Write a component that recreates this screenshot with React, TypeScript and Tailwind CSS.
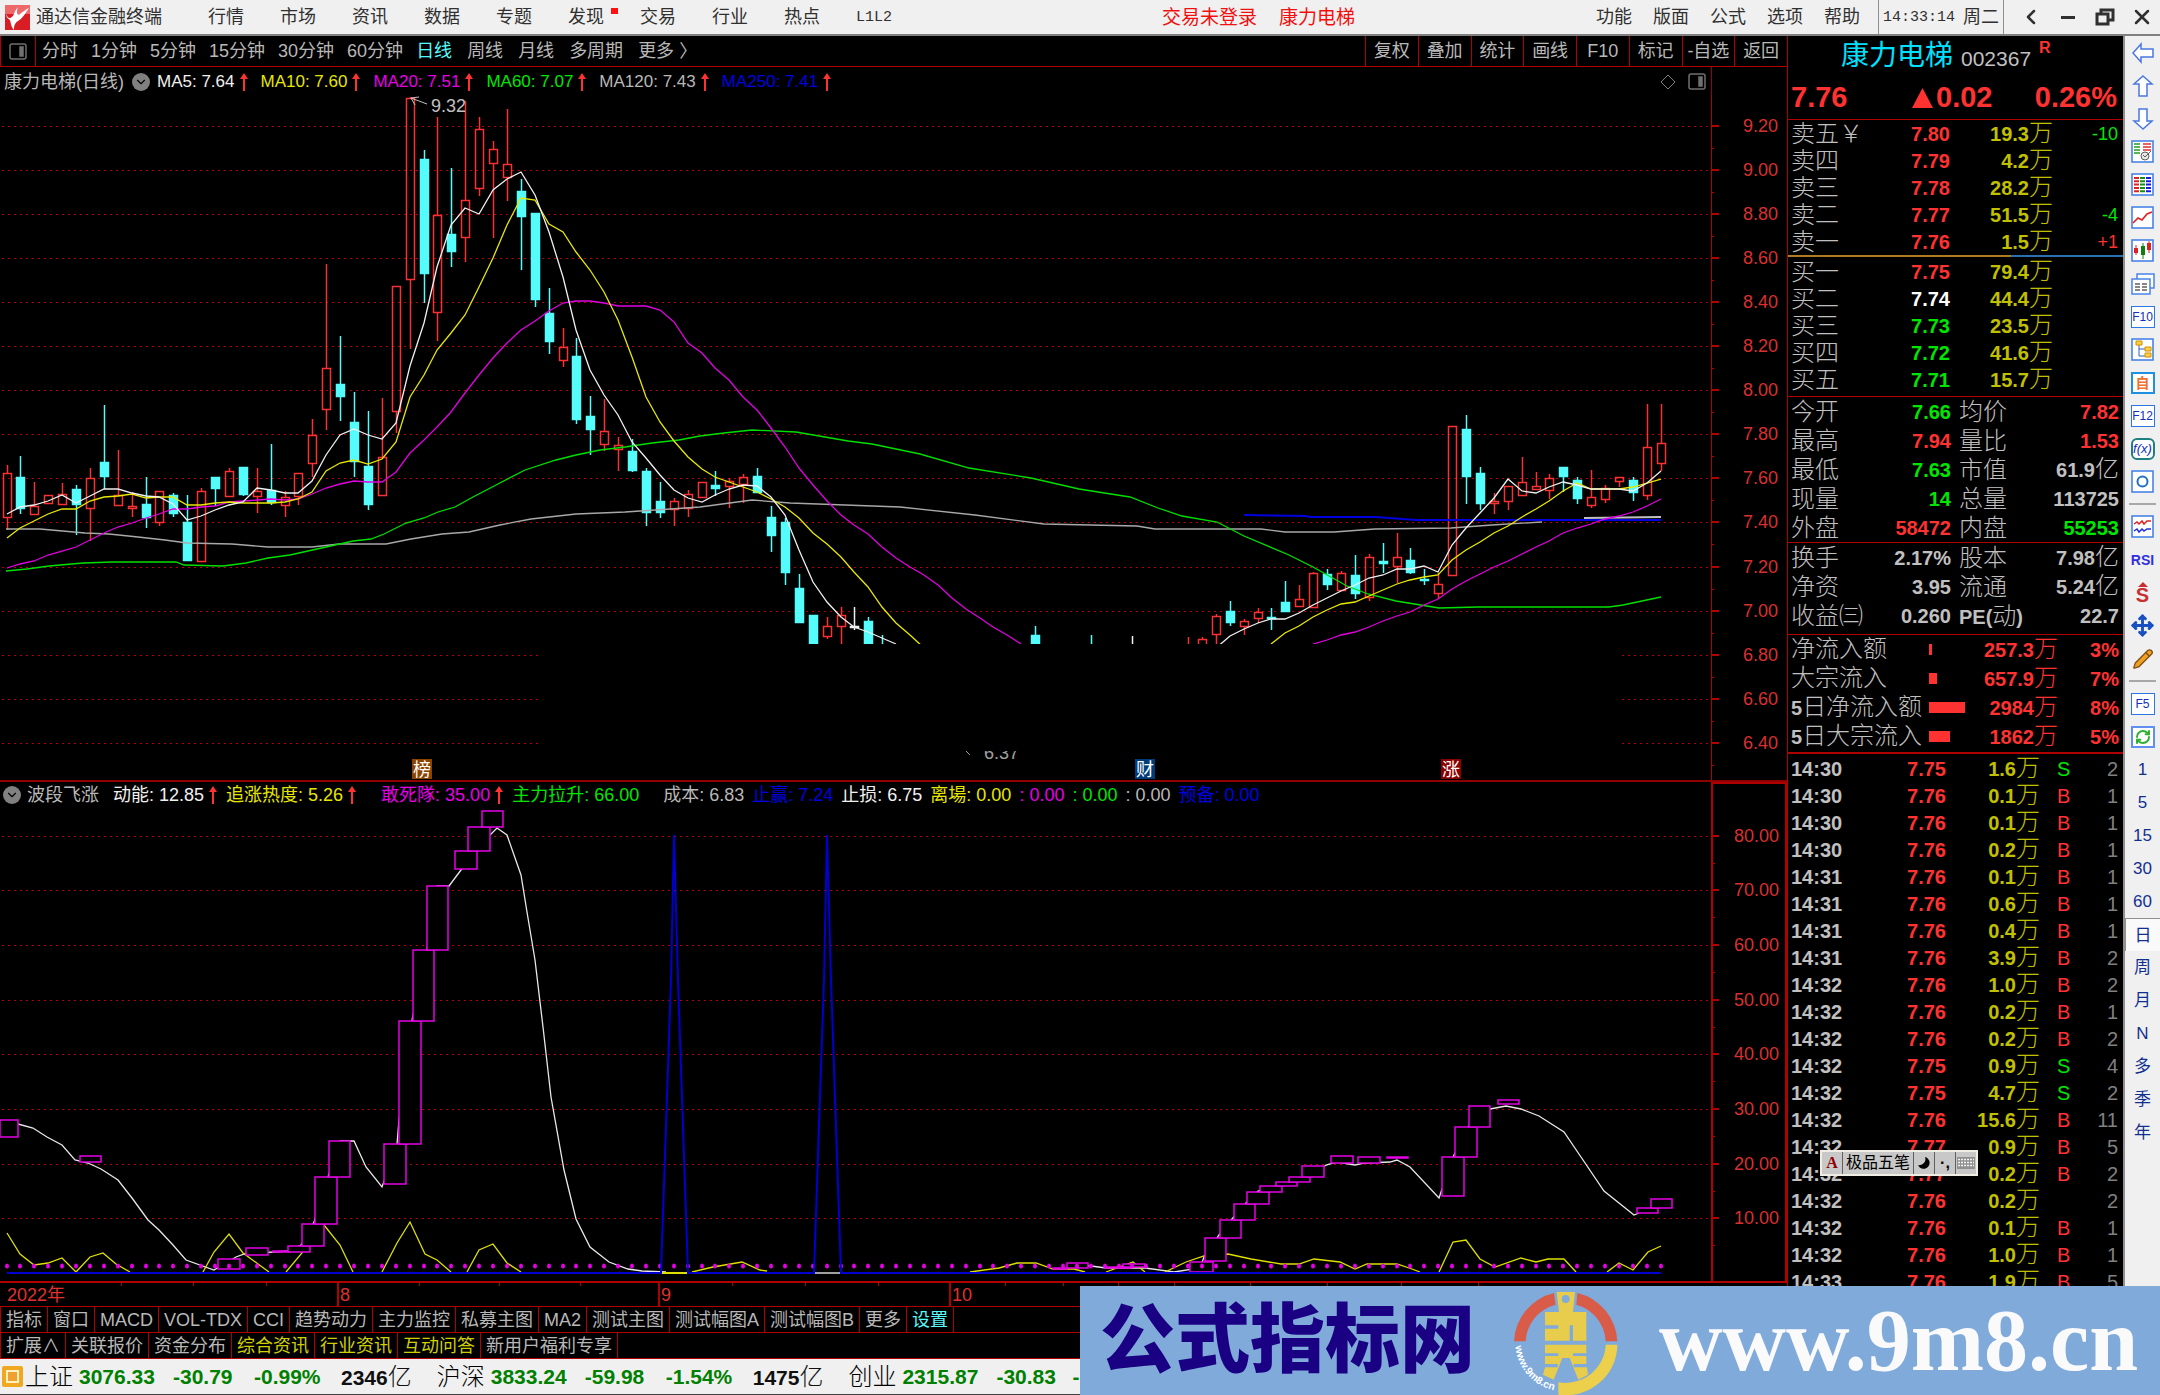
import React from 'react';
import { ChevronLeft, ChevronDown, X, Move, Pencil, RefreshCw } from 'lucide-react';

const menus = ['行情', '市场', '资讯', '数据', '专题', '发现', '交易', '行业', '热点', 'L1L2'];
const rightMenus = ['功能', '版面', '公式', '选项', '帮助'];
const periods = ['分时', '1分钟', '5分钟', '15分钟', '30分钟', '60分钟'];
const longPeriods = ['周线', '月线', '多周期', '更多 〉'];
const tools = ['复权', '叠加', '统计', '画线', 'F10', '标记', '-自选', '返回'];

const averages = [
  { text: 'MA5: 7.64', color: 'text-[#f0f0f0]' },
  { text: 'MA10: 7.60', color: 'text-[#e6e600]' },
  { text: 'MA20: 7.51', color: 'text-[#e600e6]' },
  { text: 'MA60: 7.07', color: 'text-[#00e600]' },
  { text: 'MA120: 7.43', color: 'text-[#b8b8b8]' },
  { text: 'MA250: 7.41', color: 'text-[#0000e0]' },
];

const signals = [
  { text: '动能: 12.85', color: 'text-[#f0f0f0]', up: true },
  { text: '追涨热度: 5.26', color: 'text-[#e6e600]', up: true },
  { text: '敢死隊: 35.00', color: 'text-[#e600e6] ml-4', up: true },
  { text: '主力拉升: 66.00', color: 'text-[#00e600] mr-4' },
  { text: '成本: 6.83', color: 'text-[#b8b8b8]' },
  { text: '止赢: 7.24', color: 'text-[#0000e0]' },
  { text: '止损: 6.75', color: 'text-[#f0f0f0]' },
  { text: '离場: 0.00', color: 'text-[#e6e600]' },
  { text: ': 0.00', color: 'text-[#e600e6]' },
  { text: ': 0.00', color: 'text-[#00e600]' },
  { text: ': 0.00', color: 'text-[#b8b8b8]' },
  { text: '预备: 0.00', color: 'text-[#0000e0]' },
];

const tabs = ['指标', '窗口', 'MACD', 'VOL-TDX', 'CCI', '趋势动力', '主力监控', '私募主图', 'MA2', '测试主图', '测试幅图A', '测试幅图B', '更多', '设置'];
const extras = ['扩展∧', '关联报价', '资金分布', '综合资讯', '行业资讯', '互动问答', '新用户福利专享'];

const indices = [
  { name: '上证', last: '3076.33', diff: '-30.79', pct: '-0.99%', amount: '2346' },
  { name: '沪深', last: '3833.24', diff: '-59.98', pct: '-1.54%', amount: '1475' },
];

const RED = 'text-[#ff3232]';
const GREEN = 'text-[#00e600]';
const GRAY = 'text-[#c0c0c0]';

const sells = [
  ['卖五￥', '7.80', RED, '19.3', '-10', GREEN],
  ['卖四', '7.79', RED, '4.2', '', ''],
  ['卖三', '7.78', RED, '28.2', '', ''],
  ['卖二', '7.77', RED, '51.5', '-4', GREEN],
  ['卖一', '7.76', RED, '1.5', '+1', RED],
];
const buys = [
  ['买一', '7.75', RED, '79.4', '', ''],
  ['买二', '7.74', 'text-white', '44.4', '', ''],
  ['买三', '7.73', GREEN, '23.5', '', ''],
  ['买四', '7.72', GREEN, '41.6', '', ''],
  ['买五', '7.71', GREEN, '15.7', '', ''],
];

const quotes = [
  ['今开', '7.66', GREEN, '均价', '7.82', '', RED],
  ['最高', '7.94', RED, '量比', '1.53', '', RED],
  ['最低', '7.63', GREEN, '市值', '61.9', '亿', GRAY],
  ['现量', '14', GREEN, '总量', '113725', '', GRAY],
  ['外盘', '58472', RED, '内盘', '55253', '', GREEN],
];
const basics = [
  ['换手', '2.17%', GRAY, '股本', '7.98', '亿', GRAY],
  ['净资', '3.95', GRAY, '流通', '5.24', '亿', GRAY],
  ['收益㈢', '0.260', GRAY, 'PE(动)', '22.7', '', GRAY],
];

const flows = [
  { label: '净流入额', bar: 3, value: '257.3', pct: '3%' },
  { label: '大宗流入', bar: 8, value: '657.9', pct: '7%' },
  { label: '5日净流入额', bar: 36, value: '2984', pct: '8%' },
  { label: '5日大宗流入', bar: 21, value: '1862', pct: '5%' },
];

const ticks = [
  ['14:30', '7.75', '1.6', 'S', '2'],
  ['14:30', '7.76', '0.1', 'B', '1'],
  ['14:30', '7.76', '0.1', 'B', '1'],
  ['14:30', '7.76', '0.2', 'B', '1'],
  ['14:31', '7.76', '0.1', 'B', '1'],
  ['14:31', '7.76', '0.6', 'B', '1'],
  ['14:31', '7.76', '0.4', 'B', '1'],
  ['14:31', '7.76', '3.9', 'B', '2'],
  ['14:32', '7.76', '1.0', 'B', '2'],
  ['14:32', '7.76', '0.2', 'B', '1'],
  ['14:32', '7.76', '0.2', 'B', '2'],
  ['14:32', '7.75', '0.9', 'S', '4'],
  ['14:32', '7.75', '4.7', 'S', '2'],
  ['14:32', '7.76', '15.6', 'B', '11'],
  ['14:32', '7.77', '0.9', 'B', '5'],
  ['14:32', '7.77', '0.2', 'B', '2'],
  ['14:32', '7.76', '0.2', '', '2'],
  ['14:32', '7.76', '0.1', 'B', '1'],
  ['14:32', '7.76', '1.0', 'B', '1'],
  ['14:33', '7.76', '1.9', 'B', '5'],
];

// [index, kind, high, body top, body bottom, low]
type Candle = [number, 'r' | 'c' | 'w', number, number, number, number];
const candles: Candle[] = [
  [0, 'r', 465, 473, 518, 530], [1, 'c', 456, 477, 509, 514], [2, 'r', 482, 506, 515, 515],
  [3, 'r', 495, 495, 504, 504], [4, 'r', 483, 494, 505, 505], [5, 'c', 485, 489, 505, 535],
  [6, 'r', 468, 478, 509, 541], [7, 'c', 405, 462, 477, 489], [8, 'r', 450, 495, 506, 506],
  [9, 'r', 492, 506, 509, 517], [10, 'c', 477, 504, 518, 528], [11, 'r', 491, 491, 523, 526],
  [12, 'c', 493, 495, 514, 517], [13, 'c', 495, 522, 561, 561], [14, 'r', 488, 491, 562, 562],
  [15, 'c', 477, 477, 489, 506], [16, 'r', 468, 471, 497, 497], [17, 'c', 467, 467, 495, 496],
  [18, 'r', 468, 491, 497, 513], [19, 'c', 444, 490, 503, 505], [20, 'r', 491, 497, 506, 517],
  [21, 'r', 473, 473, 497, 505], [22, 'r', 419, 435, 464, 477], [23, 'r', 264, 368, 410, 430],
  [24, 'c', 336, 384, 397, 421], [25, 'c', 392, 422, 462, 477], [26, 'c', 411, 466, 505, 510],
  [27, 'r', 398, 457, 496, 496], [28, 'r', 286, 286, 412, 433], [29, 'r', 97, 98, 280, 349],
  [30, 'c', 150, 159, 274, 303], [31, 'r', 117, 215, 313, 341], [32, 'c', 168, 234, 252, 267],
  [33, 'r', 101, 200, 238, 262], [34, 'r', 117, 129, 189, 196], [35, 'r', 141, 149, 164, 238],
  [36, 'r', 109, 164, 178, 201], [37, 'c', 179, 191, 217, 270], [38, 'c', 213, 213, 300, 307],
  [39, 'c', 288, 313, 342, 354], [40, 'r', 328, 347, 361, 367], [41, 'c', 338, 356, 420, 424],
  [42, 'c', 396, 416, 430, 455], [43, 'r', 399, 431, 445, 451], [44, 'r', 437, 445, 450, 471],
  [45, 'c', 439, 451, 471, 472], [46, 'c', 468, 471, 513, 526], [47, 'c', 482, 501, 513, 518],
  [48, 'r', 498, 501, 510, 526], [49, 'r', 490, 494, 509, 517], [50, 'r', 482, 482, 498, 498],
  [51, 'c', 471, 485, 489, 496], [52, 'r', 478, 481, 487, 508], [53, 'r', 474, 477, 485, 503],
  [54, 'c', 468, 476, 493, 493], [55, 'c', 506, 517, 536, 552], [56, 'c', 518, 522, 573, 585],
  [57, 'c', 574, 588, 623, 623], [58, 'c', 615, 615, 660, 664], [59, 'r', 617, 626, 637, 639],
  [60, 'r', 607, 615, 627, 650], [61, 'w', 607, 626, 627, 630], [62, 'c', 617, 621, 660, 660],
  [63, 'c', 635, 648, 660, 660], [74, 'c', 626, 635, 660, 660], [78, 'c', 635, 648, 660, 660],
  [81, 'w', 636, 650, 651, 660], [85, 'r', 637, 650, 660, 660], [86, 'r', 637, 639, 660, 660],
  [87, 'r', 614, 616, 635, 650], [88, 'c', 601, 611, 623, 626], [89, 'r', 619, 621, 627, 635],
  [90, 'r', 608, 612, 619, 623], [91, 'c', 608, 617, 619, 630], [92, 'c', 581, 602, 612, 612],
  [93, 'r', 585, 599, 607, 607], [94, 'r', 572, 573, 608, 608], [95, 'c', 569, 574, 585, 590],
  [96, 'r', 571, 573, 591, 591], [97, 'c', 555, 575, 594, 599], [98, 'r', 554, 557, 598, 601],
  [99, 'c', 543, 561, 564, 573], [100, 'r', 533, 557, 567, 583], [101, 'c', 548, 560, 573, 574],
  [102, 'c', 569, 579, 581, 585], [103, 'r', 573, 584, 594, 599], [104, 'r', 426, 426, 576, 576],
  [105, 'c', 415, 429, 477, 504], [106, 'c', 467, 473, 504, 510], [107, 'r', 493, 501, 504, 514],
  [108, 'r', 486, 486, 502, 510], [109, 'r', 457, 482, 496, 496], [110, 'r', 472, 486, 490, 490],
  [111, 'r', 474, 478, 491, 499], [112, 'c', 467, 467, 477, 492], [113, 'c', 477, 480, 499, 504],
  [114, 'r', 470, 497, 506, 508], [115, 'r', 485, 488, 500, 503], [116, 'r', 477, 477, 482, 487],
  [117, 'c', 477, 480, 493, 501], [118, 'r', 404, 447, 496, 500], [119, 'r', 404, 443, 464, 471],
];

const STEP = 13.9;
const xAt = (i: number) => Math.round(6.5 + i * STEP);
const series = (start: number, values: number[]) => values.map((y, i) => `${xAt(start + i)},${y}`).join(' ');

const ma5a = series(0, [514, 507, 505, 501, 495, 503, 496, 489, 489, 493, 496, 497, 504, 520, 516, 510, 505, 502, 488, 490, 493, 493, 481, 455, 435, 429, 435, 439, 423, 366, 323, 267, 225, 208, 214, 190, 179, 172, 195, 232, 277, 330, 370, 395, 415, 442, 458, 475, 490, 498, 502, 495, 489, 485, 486, 497, 515, 550, 582, 602, 617, 627, 632, 638, 644]);
const ma5b = series(87, [648, 636, 629, 623, 619, 619, 613, 605, 598, 591, 585, 578, 575, 569, 569, 566, 572, 545, 528, 513, 498, 479, 491, 493, 487, 482, 485, 489, 489, 489, 491, 483, 471]);
const ma10a = series(0, [538, 528, 521, 514, 509, 509, 501, 497, 496, 494, 498, 497, 497, 505, 505, 503, 502, 503, 503, 503, 502, 499, 492, 471, 463, 460, 464, 459, 442, 397, 375, 350, 333, 315, 287, 258, 225, 198, 200, 224, 232, 252, 270, 292, 320, 357, 397, 422, 441, 457, 469, 477, 482, 487, 492, 499, 507, 518, 533, 544, 557, 572, 587, 607, 623, 635, 648]);
const ma10b = series(91, [644, 633, 626, 617, 610, 604, 602, 596, 590, 584, 580, 577, 575, 560, 550, 542, 533, 526, 517, 509, 501, 491, 483, 489, 489, 489, 487, 483, 479]);
const ma20a = series(0, [568, 564, 561, 555, 551, 547, 540, 533, 527, 523, 518, 514, 509, 509, 507, 506, 502, 501, 500, 499, 500, 499, 494, 488, 484, 481, 482, 482, 472, 453, 440, 427, 412, 393, 375, 358, 343, 330, 321, 311, 303, 301, 301, 303, 306, 306, 306, 310, 322, 343, 353, 368, 380, 397, 410, 428, 447, 468, 485, 501, 515, 525, 534, 547, 558, 567, 575, 585, 598, 609, 618, 627, 635, 644]);
const ma20b = series(94, [644, 640, 635, 632, 627, 621, 616, 612, 605, 599, 589, 581, 574, 567, 561, 554, 547, 541, 533, 528, 524, 519, 516, 512, 506, 499]);
const ma60 = '6,571 27,569 49,566 83,563 112,562 176,562 184,565 223,566 246,563 268,558 290,555 317,549 335,545 353,541 371,539 384,534 406,523 424,518 438,512 455,507 473,497 496,485 525,470 556,460 576,455 600,450 625,447 652,443 679,440 700,436 724,433 752,430 796,432 848,441 872,444 920,454 969,468 1031,478 1079,489 1130,497 1158,508 1182,516 1217,522 1244,536 1289,555 1313,567 1347,586 1368,594 1396,601 1439,608 1478,607 1609,607 1623,605 1661,597';
const ma120 = '6,529 40,529 85,533 109,534 138,537 165,540 187,543 232,544 268,547 312,547 339,544 386,544 411,539 442,534 469,532 500,525 531,519 576,514 625,512 670,509 700,507 752,500 790,503 900,507 975,515 1044,524 1137,526 1155,529 1261,529 1285,532 1334,532 1375,529 1451,528 1492,525 1542,522';
const ma250 = '1244,515 1306,516 1310,517 1375,517 1416,520 1661,520';

const steps = [
  [0, 1120, 18, 1137], [80, 1156, 101, 1162], [218, 1259, 240, 1269], [246, 1248, 268, 1255],
  [273, 1251, 290, 1252], [288, 1246, 310, 1252], [302, 1224, 324, 1246], [315, 1177, 337, 1224],
  [329, 1141, 350, 1177], [384, 1144, 406, 1184], [399, 1021, 421, 1144], [413, 950, 434, 1021],
  [427, 886, 448, 950], [455, 851, 477, 869], [468, 827, 490, 851], [482, 811, 503, 827],
  [1053, 1268, 1067, 1269], [1067, 1263, 1088, 1268], [1106, 1267, 1130, 1268], [1123, 1264, 1145, 1267],
  [1190, 1262, 1213, 1272], [1205, 1238, 1226, 1261], [1220, 1220, 1241, 1238], [1234, 1204, 1255, 1220],
  [1247, 1192, 1269, 1204], [1260, 1186, 1282, 1192], [1276, 1182, 1297, 1186], [1289, 1177, 1310, 1182],
  [1302, 1166, 1324, 1177], [1331, 1156, 1353, 1163], [1358, 1157, 1380, 1163], [1387, 1157, 1408, 1158],
  [1442, 1157, 1464, 1196], [1455, 1127, 1477, 1157], [1469, 1106, 1490, 1127], [1498, 1100, 1519, 1104],
  [1637, 1208, 1658, 1213], [1651, 1199, 1672, 1208],
];

const momentum = [
  '18,1124 33,1128 47,1137 62,1145 75,1160 88,1163 101,1169 118,1180 132,1198 148,1220 159,1230 173,1245 186,1260 214,1270 236,1257 247,1253 274,1252 290,1251 301,1245 314,1222 328,1177 340,1141 354,1141 366,1167 382,1187 397,1144 399,1120 412,1020 427,950 437,886 449,886 461,870 475,850 497,828 507,835 521,875 527,912 535,960 543,1027 551,1097 564,1170 576,1219 590,1247 609,1262 628,1269 642,1271 666,1272',
  '1074,1265 1091,1266 1106,1268 1145,1268 1174,1272 1200,1268 1204,1257 1219,1235 1232,1219 1246,1203 1258,1191 1310,1177 1326,1165 1337,1162 1355,1165 1364,1163 1390,1162 1397,1160 1410,1167 1439,1198 1441,1192 1453,1157 1468,1127 1482,1110 1490,1109 1506,1106 1521,1109 1539,1116 1564,1132 1581,1157 1604,1191 1634,1215 1646,1210',
];
const heat = [
  '7,1233 20,1254 34,1265 48,1263 62,1258 76,1272 90,1257 103,1253 116,1264 130,1272',
  '203,1272 214,1252 229,1234 243,1253 269,1272',
  '286,1272 302,1253 313,1233 324,1225 340,1245 353,1272',
  '382,1272 397,1243 410,1222 425,1254 437,1260 451,1272',
  '467,1272 479,1250 493,1244 507,1263 521,1272',
  '692,1272 713,1267 742,1262 760,1270 767,1271',
  '970,1272 999,1268 1017,1263 1036,1263 1053,1269 1074,1269 1085,1272',
  '1106,1272 1133,1262 1145,1272',
  '1165,1272 1186,1262 1204,1256 1228,1254 1251,1259 1281,1264 1299,1264 1314,1259 1340,1262 1355,1269 1367,1264 1397,1264 1412,1269 1420,1272',
  '1439,1272 1453,1242 1466,1240 1480,1259 1495,1267 1521,1258 1536,1262 1548,1259 1564,1259 1576,1272',
  '1607,1272 1619,1263 1633,1270 1648,1252 1661,1246',
];

const UpArrow = () => (
  <svg className="ml-1 h-[18px] w-[10px] shrink-0" viewBox="0 0 10 18">
    <path d="M5 0 L9 6 H6 V18 H4 V6 H1 Z" fill="#ff3232" />
  </svg>
);

const Dropdown = () => (
  <button aria-label="展开" className="flex h-[18px] w-[18px] shrink-0 items-center justify-center rounded-full bg-[#808080]">
    <ChevronDown className="h-3.5 w-3.5 text-black" />
  </button>
);

const TitleBar = () => (
  <header className="flex h-9 items-center border-b-2 border-[#808080] bg-[#f0f0f0] pl-[5px] text-[18px] text-[#303030]">
    <svg className="h-[25px] w-[25px]" viewBox="0 0 25 25">
      <rect width="25" height="25" fill="#d81e24" />
      <rect width="25" height="9" fill="#ee6a6a" />
      <path d="M1 9 C3 14 5 14 8 11 C9 9 10 5 13 2 C11 7 12 11 15 9 C18 7 21 4 24 3 C20 9 17 14 13 16 C10 18 9 20 9 25 C6 22 6 18 5 15 C3 14 1 12 1 9 Z" fill="#fff" />
    </svg>
    <span className="ml-[6px]">通达信金融终端</span>
    <nav className="ml-[46px] flex gap-9">
      {menus.map((m) => (
        <button key={m} className={m === 'L1L2' ? "font-['Liberation_Mono',monospace] text-[15px]" : 'relative'}>
          {m}
          {m === '发现' && <i className="absolute -right-[14px] top-0 h-[6px] w-[7px] bg-[#ff1010]" />}
        </button>
      ))}
    </nav>
    <div className="ml-[270px] flex gap-[22px] text-[19px] text-[#f01010]">
      <button>交易未登录</button>
      <button>康力电梯</button>
    </div>
    <nav className="ml-auto flex gap-[21px]">
      {rightMenus.map((m) => (
        <button key={m}>{m}</button>
      ))}
    </nav>
    <div className="ml-[18px] flex h-full items-center gap-2 border-x border-[#909090] px-1">
      <span className="font-['Liberation_Mono',monospace] text-[15px]">14:33:14</span>
      <span>周二</span>
    </div>
    <div className="ml-2 flex">
      <button aria-label="后退" className="flex w-[37px] justify-center"><ChevronLeft className="h-6 w-6" strokeWidth={2.5} /></button>
      <button aria-label="最小化" className="flex w-[37px] items-center justify-center"><i className="h-[3px] w-[14px] bg-[#303030]" /></button>
      <button aria-label="还原" className="flex w-[37px] items-center justify-center">
        <svg className="h-[18px] w-[20px]" viewBox="0 0 20 18" fill="none" stroke="#303030" strokeWidth="3">
          <path d="M6 5 V2 H18 V12 H14" />
          <rect x="2" y="6" width="11" height="10" />
        </svg>
      </button>
      <button aria-label="关闭" className="flex w-[37px] justify-center"><X className="h-6 w-6" strokeWidth={2.5} /></button>
    </div>
  </header>
);

const PanelIcon = () => (
  <svg className="h-[17px] w-[18px]" viewBox="0 0 18 17" fill="none" stroke="#707070" strokeWidth="1.5">
    <rect x="1" y="1" width="16" height="15" rx="2" />
    <rect x="11" y="4" width="3" height="9" fill="#707070" />
  </svg>
);

const Toolbar = () => (
  <div className="flex h-[31px] items-stretch border-b border-l border-[#b00000] text-[18px] text-[#b8b8b8]">
    <button aria-label="侧栏" className="flex w-[35px] items-center justify-center border-r border-[#b00000]"><PanelIcon /></button>
    <nav className="ml-[6px] flex gap-[13px]">
      {periods.map((p) => (
        <button key={p}>{p}</button>
      ))}
    </nav>
    <nav className="ml-[13px] flex gap-[15px]">
      <button className="text-[#54fcfc]">日线</button>
      {longPeriods.map((p) => (
        <button key={p} className="whitespace-nowrap">{p}</button>
      ))}
    </nav>
    <nav className="ml-auto grid w-[422px] grid-cols-8">
      {tools.map((t) => (
        <button key={t} className="whitespace-nowrap border-l border-[#b00000]">{t}</button>
      ))}
    </nav>
  </div>
);

const Mark = ({ x, text, fill }: { x: number; text: string; fill: string }) => (
  <g>
    <rect x={x} y="759" width="20" height="20" fill={fill} />
    <text x={x + 10} y="776" fontSize="18" textAnchor="middle" fill="#fff">{text}</text>
  </g>
);

const PriceChart = () => {
  const grid = Array.from({ length: 15 }, (_, i) => Math.round(125.5 + i * 44.1));
  return (
    <svg className="block h-auto w-full" viewBox="0 96 1787 684" role="img" aria-label="日线">
      <g stroke="#b40000" shapeRendering="crispEdges">
        {grid.map((y) => (
          <g key={y}>
            <line x1="2" x2="1710" y1={y} y2={y} strokeDasharray="2 4" />
            <line x1="1711" x2="1719" y1={y} y2={y} strokeWidth="2" />
            <line x1="1711" x2="1714" y1={y + 22} y2={y + 22} />
          </g>
        ))}
        <line x1="1711.5" x2="1711.5" y1="96" y2="780" />
      </g>
      <g fontSize="18" fill="#d83030" textAnchor="end">
        {grid.map((y, i) => (
          <text key={y} x="1778" y={y + 6}>{(9.2 - i * 0.2).toFixed(2)}</text>
        ))}
      </g>
      <g strokeWidth="1.5">
        {candles.map(([i, kind, high, top, bottom, low]) => {
          const x = xAt(i);
          const color = kind === 'r' ? '#f83232' : kind === 'c' ? '#54fcfc' : '#f0f0f0';
          return (
            <g key={i} stroke={color} fill={kind === 'r' ? 'none' : color}>
              {high < top && <line x1={x + 0.5} x2={x + 0.5} y1={high} y2={top} />}
              {low > bottom && <line x1={x + 0.5} x2={x + 0.5} y1={bottom} y2={low} />}
              <rect x={x - 3.5} y={top + 0.5} width="8" height={Math.max(bottom - top - 1, 1)} />
            </g>
          );
        })}
      </g>
      <g fill="none" strokeWidth="1.3">
        <polyline points={ma250} stroke="#0000e0" strokeWidth="2" />
        <polyline points={ma120} stroke="#a8a8a8" />
        <line x1="1584" x2="1661" y1="518" y2="517" stroke="#c0c0c0" strokeWidth="2" />
        <polyline points={ma60} stroke="#00e000" />
        <polyline points={ma20a} stroke="#e000e0" />
        <polyline points={ma20b} stroke="#e000e0" />
        <polyline points={ma10a} stroke="#e8e800" />
        <polyline points={ma10b} stroke="#e8e800" />
        <polyline points={ma5a} stroke="#f0f0f0" />
        <polyline points={ma5b} stroke="#f0f0f0" />
      </g>
      <g stroke="#c0c0c0" fill="none">
        <path d="M427 104 L411 98 M411 98 L419 97 M411 98 L415 105" />
      </g>
      <text x="431" y="112" fontSize="18" fill="#c0c0c0">9.32</text>
      <text x="984" y="759" fontSize="18" fill="#a0a0a0">6.37</text>
      <path d="M966 751 l4 4" stroke="#a0a0a0" />
      <rect x="540" y="644" width="1081" height="107" fill="#000" />
      <Mark x={412} text="榜" fill="#8a4400" />
      <Mark x={1135} text="财" fill="#003c78" />
      <Mark x={1441} text="涨" fill="#8a0000" />
    </svg>
  );
};

const SignalChart = () => {
  const grid = Array.from({ length: 8 }, (_, i) => Math.round(835.5 + i * 54.7));
  return (
    <svg className="block h-auto w-full" viewBox="0 808 1787 498" role="img" aria-label="波段飞涨">
      <g stroke="#b40000" shapeRendering="crispEdges">
        {grid.map((y) => (
          <g key={y}>
            <line x1="2" x2="1710" y1={y} y2={y} strokeDasharray="2 4" />
            <line x1="1712" x2="1719" y1={y} y2={y} strokeWidth="2" />
            <line x1="1712" x2="1715" y1={y + 27} y2={y + 27} />
          </g>
        ))}
      </g>
      <g fontSize="18" fill="#d83030" textAnchor="end">
        {grid.map((y, i) => (
          <text key={y} x="1779" y={y + 6}>{(80 - i * 10).toFixed(2)}</text>
        ))}
      </g>
      <g fill="none" strokeWidth="1.3">
        {momentum.map((p) => <polyline key={p} points={p} stroke="#e8e8e8" />)}
        {heat.map((p) => <polyline key={p} points={p} stroke="#e0e000" />)}
      </g>
      <g fill="#000" stroke="#e600e6" strokeWidth="1.5">
        {steps.map(([x1, y1, x2, y2]) => (
          <rect key={`${x1}-${y1}`} x={x1} y={y1} width={x2 - x1} height={y2 - y1} />
        ))}
      </g>
      <g fill="#e600e6">
        {Array.from({ length: 120 }, (_, i) => (
          <ellipse key={i} cx={xAt(i)} cy="1266" rx="2" ry="2.5" />
        ))}
      </g>
      <path d="M7 1273 H1661" stroke="#0000d0" strokeWidth="2" />
      <path d="M661 1273 L671 980 L674 835 L678 980 L688 1273 M814 1273 L824 980 L827 835 L831 980 L841 1273" fill="none" stroke="#0000d0" strokeWidth="2" />
      <path d="M662 1273 H687" stroke="#e0e000" strokeWidth="2" />
      <path d="M815 1273 H840" stroke="#a0a0a0" strokeWidth="2" />
      <g stroke="#b00000" fill="none" shapeRendering="crispEdges">
        <path d="M0 1282 H1787" strokeWidth="2" />
        <path d="M1712 808 V1282 M1786 808 V1282" strokeWidth="2" />
        {[338, 659, 950].map((x) => <line key={x} x1={x} x2={x} y1="1282" y2="1306" strokeWidth="2" />)}
        {[121, 193, 266, 419, 499, 580, 732, 805, 878, 1005, 1063, 1118, 1174, 1250, 1327, 1401, 1478].map((x) => (
          <line key={x} x1={x} x2={x} y1="1282" y2="1286" />
        ))}
      </g>
      <g fontSize="18" fill="#e03030">
        <text x="7" y="1301">2022年</text>
        <text x="340" y="1301">8</text>
        <text x="661" y="1301">9</text>
        <text x="952" y="1301">10</text>
      </g>
    </svg>
  );
};

const BookRows = ({ rows }: { rows: string[][] }) => (
  <table className="w-full table-fixed leading-6">
    <colgroup>
      <col className="w-[76px]" />
      <col className="w-[86px]" />
      <col className="w-[103px]" />
      <col />
    </colgroup>
    <tbody>
      {rows.map(([label, price, color, vol, change, changeColor]) => (
        <tr key={label} className="h-[27px]">
          <th scope="row" className="whitespace-nowrap pl-[3px] text-left text-[24px] font-light leading-6 text-[#c0c0c0]">{label}</th>
          <td className={`text-right text-[20px] font-bold leading-6 ${color}`}>{price}</td>
          <td className="text-right text-[20px] font-bold leading-6 text-[#c0c000]">
            {vol}<span className="text-[24px] font-light leading-none">万</span>
          </td>
          <td className={`pr-[5px] text-right text-[18px] leading-6 ${changeColor}`}>{change}</td>
        </tr>
      ))}
    </tbody>
  </table>
);

const QuoteRows = ({ rows }: { rows: string[][] }) => (
  <table className="w-full table-fixed">
    <colgroup>
      <col className="w-[80px]" />
      <col className="w-[83px]" />
      <col className="w-[74px]" />
      <col />
    </colgroup>
    <tbody>
      {rows.map(([a, av, ac, b, bv, unit, bc]) => (
        <tr key={a} className="h-[29px]">
          <th scope="row" className="whitespace-nowrap pl-[3px] text-left text-[24px] font-light leading-6 text-[#c0c0c0]">{a}</th>
          <td className={`text-right text-[20px] font-bold leading-6 ${ac}`}>{av}</td>
          <th scope="row" className="whitespace-nowrap pl-2 text-left text-[24px] font-light leading-6 text-[#c0c0c0]">
            {b === 'PE(动)' ? (
              <>
                <span className="text-[20px] font-bold leading-none">PE(</span>动<span className="text-[20px] font-bold leading-none">)</span>
              </>
            ) : b}
          </th>
          <td className={`whitespace-nowrap pr-1 text-right text-[20px] font-bold leading-6 ${bc}`}>
            {bv}<span className="text-[24px] font-light leading-none">{unit}</span>
          </td>
        </tr>
      ))}
    </tbody>
  </table>
);

const QuotePanel = () => (
  <aside className="relative w-[336px] shrink-0 border-l border-[#b00000]">
    <div className="flex h-10 items-center pl-[53px]">
      <h1 className="text-[28px] leading-none text-[#00e0ff]">康力电梯</h1>
      <span className="ml-2 mt-1 text-[21px] text-[#c0c0c0]">002367</span>
      <sup className="ml-2 text-[16px] font-bold text-[#ff3232]">R</sup>
    </div>
    <div className="flex h-[44px] items-center border-b border-[#b00000] pl-[3px] pr-[6px] text-[29px] font-bold leading-none text-[#ff3232]">
      <span className="w-[121px]">7.76</span>
      <svg className="mr-[3px] h-[20px] w-[21px]" viewBox="0 0 21 20"><path d="M10.5 0 L21 20 H0 Z" fill="#ff3232" /></svg>
      <span>0.02</span>
      <span className="ml-auto">0.26%</span>
    </div>
    <BookRows rows={sells} />
    <div className="flex h-[2px]">
      <i className="w-2/3 bg-[#b07a20]" />
      <i className="flex-1 bg-[#2a70b0]" />
    </div>
    <div className="border-b border-[#b00000] pb-[3px] pt-px"><BookRows rows={buys} /></div>
    <div className="border-b border-[#b00000]"><QuoteRows rows={quotes} /></div>
    <div className="border-b border-[#b00000] pb-1"><QuoteRows rows={basics} /></div>
    <div className="border-b-2 border-[#b00000] pb-px">
      <table className="w-full table-fixed">
        <colgroup>
          <col className="w-[141px]" />
          <col className="w-[36px]" />
          <col className="w-[93px]" />
          <col />
        </colgroup>
        <tbody>
          {flows.map((f) => (
            <tr key={f.label} className="h-[29px] text-[20px] font-bold leading-6 text-[#ff3232]">
              <th scope="row" className="whitespace-nowrap pl-[3px] text-left text-[#c0c0c0]">
                {f.label.startsWith('5') && '5'}
                <span className="text-[24px] font-light leading-none">{f.label.replace('5', '')}</span>
              </th>
              <td><div className="h-[11px] bg-[#ff3232]" style={{ width: f.bar }} /></td>
              <td className="whitespace-nowrap text-right">{f.value}<span className="text-[24px] font-light leading-none">万</span></td>
              <td className="pr-1 text-right">{f.pct}</td>
            </tr>
          ))}
        </tbody>
      </table>
    </div>
    <table className="mt-px w-full table-fixed">
      <colgroup>
        <col className="w-[75px]" />
        <col className="w-[83px]" />
        <col className="w-[94px]" />
        <col className="w-[40px]" />
        <col />
      </colgroup>
      <tbody>
        {ticks.map(([time, price, vol, side, count], i) => (
          <tr key={i} className="h-[27px] text-[20px] font-bold leading-6">
            <td className="pl-[3px] text-[#c0c0c0]">{time}</td>
            <td className="text-right text-[#ff3232]">{price}</td>
            <td className="text-right text-[#c0c000]">{vol}<span className="text-[24px] font-light leading-none">万</span></td>
            <td className={`pl-[17px] font-normal ${side === 'S' ? 'text-[#00e600]' : 'text-[#ff3232]'}`}>{side}</td>
            <td className="pr-[5px] text-right font-normal text-[#808080]">{count}</td>
          </tr>
        ))}
      </tbody>
    </table>
    <div className="absolute left-8 top-[1114px] flex h-[26px] w-[158px] items-stretch gap-px border-2 border-[#f0eee4] bg-[#606060] text-[16px] leading-none text-black">
      <button className="w-5 bg-[#c8c8c8] font-['Liberation_Serif',serif] font-bold text-[#900000]">A</button>
      <button className="flex-1 whitespace-nowrap bg-[#c8c8c8]">极品五笔</button>
      <button aria-label="半角" className="flex w-5 items-center justify-center bg-[#c8c8c8]">
        <svg className="h-3.5 w-3.5" viewBox="0 0 14 14"><path d="M8 1 A6 6 0 1 1 1 9 A6 6 0 0 0 8 1 Z" fill="#000" /></svg>
      </button>
      <button className="w-5 bg-[#c8c8c8] font-bold">·,</button>
      <button aria-label="软键盘" className="flex w-5 items-center justify-center bg-[#c8c8c8]">
        <svg className="h-3 w-[18px]" viewBox="0 0 18 12">
          <rect width="18" height="12" fill="#909090" />
          <path d="M1 2.5 H17 M1 5.5 H17 M1 8.5 H17" stroke="#f4f4f4" strokeWidth="1.6" strokeDasharray="2 1" />
        </svg>
      </button>
    </div>
  </aside>
);

const HollowArrow = ({ turn }: { turn: string }) => (
  <svg className={`h-[22px] w-[22px] ${turn}`} viewBox="0 0 22 22">
    <path d="M1 11 L9 2 V7 H21 V15 H9 V20 Z" fill="#fff" stroke="#4a78e0" strokeWidth="1.5" />
  </svg>
);

const Box = ({ children }: { children: React.ReactNode }) => (
  <svg className="h-[23px] w-[23px]" viewBox="0 0 23 23" fill="none">
    <rect x="1" y="1" width="21" height="21" fill="#fff" stroke="#4a84e8" strokeWidth="1.6" />
    {children}
  </svg>
);

const BoxText = ({ text }: { text: string }) => (
  <span className="flex h-[22px] w-[24px] items-center justify-center border border-[#2a78e0] bg-white text-[12px] leading-none text-[#1030c0]">{text}</span>
);

const sideTools = [
  { name: '返回', icon: <HollowArrow turn="rotate-0" /> },
  { name: '上一个', icon: <HollowArrow turn="rotate-90" /> },
  { name: '下一个', icon: <HollowArrow turn="-rotate-90" /> },
  {
    name: '报价',
    icon: (
      <Box>
        <path d="M3 4 H9 M3 7 H9 M3 10 H9 M3 13 H9" stroke="#20a020" strokeWidth="1.6" />
        <path d="M12 4 H20 M12 7 H20 M12 10 H20" stroke="#e03030" strokeWidth="1.6" />
        <circle cx="14" cy="16" r="4" fill="#e8e8e8" stroke="#606060" />
        <path d="M12 15 L14 17 L20 11" stroke="#606060" />
      </Box>
    ),
  },
  {
    name: '列表',
    icon: (
      <Box>
        <path d="M5.5 4 V20" stroke="#e02020" strokeWidth="5" strokeDasharray="2 1.3" />
        <path d="M11.5 4 V20" stroke="#109010" strokeWidth="5" strokeDasharray="2 1.3" />
        <path d="M17.5 4 V20" stroke="#1818e0" strokeWidth="5" strokeDasharray="2 1.3" />
      </Box>
    ),
  },
  { name: '走势', icon: <Box><path d="M2 17 L7 12 L11 14 L16 8 L21 6" stroke="#e02020" strokeWidth="1.6" /></Box> },
  {
    name: 'K线',
    icon: (
      <Box>
        <path d="M5 6 V16 M18 2 V14" stroke="#e02020" />
        <path d="M12 4 V20" stroke="#108010" />
        <path d="M3 9 H7 V14 H3 Z M16 4 H20 V11 H16 Z" fill="#e02020" />
        <path d="M10 7 H14 V16 H10 Z" fill="#108010" />
      </Box>
    ),
  },
  {
    name: '多窗',
    icon: (
      <svg className="h-[22px] w-[24px]" viewBox="0 0 24 22" fill="#fff" stroke="#4a84e8" strokeWidth="1.5">
        <rect x="6" y="1" width="17" height="14" />
        <rect x="1" y="6" width="18" height="15" />
        <path d="M4 11 H9 M4 14 H9 M4 17 H9 M11 11 H16 M11 14 H16 M11 17 H16" stroke="#606060" />
      </svg>
    ),
  },
  { name: 'F10', icon: <BoxText text="F10" /> },
  {
    name: '树形',
    icon: (
      <Box>
        <path d="M8 6 V18 H14 M8 11 H14" stroke="#3060c0" />
        <path d="M5 3 H11 V7 H5 Z M14 9 H20 V13 H14 Z M14 15 H20 V19 H14 Z" fill="#ffd040" stroke="#d09000" />
      </Box>
    ),
  },
  { name: '自选', icon: <span className="flex h-[22px] w-[24px] items-center justify-center border-2 border-[#2090e0] bg-white text-[14px] font-bold leading-none text-[#f07030]">自</span> },
  { name: 'F12', icon: <BoxText text="F12" /> },
  { name: '公式', icon: <span className="flex h-[22px] w-[24px] items-center justify-center rounded-md border-2 border-[#208080] bg-white text-[13px] italic leading-none text-[#1030c0]">f(x)</span> },
  { name: '圆', icon: <Box><circle cx="11.5" cy="11.5" r="5" stroke="#2070c8" strokeWidth="2" /></Box> },
];

const drawTools = [
  {
    name: '指标',
    icon: (
      <Box>
        <path d="M3 9 L6 7 L8 9 L11 6 L13 9 L16 6 L20 6" stroke="#e02020" strokeWidth="1.5" />
        <path d="M3 16 L6 14 L8 17 L11 14 L13 16 L16 14 L20 14" stroke="#2030e0" strokeWidth="1.5" />
      </Box>
    ),
  },
  { name: 'RSI', icon: <span className="text-[14px] font-bold text-[#3030e0]">RSI</span> },
  {
    name: '资金',
    icon: (
      <span className="flex flex-col items-center text-[20px] font-bold leading-4 text-[#c83030]">
        <svg className="h-[5px] w-[10px]" viewBox="0 0 10 5"><path d="M5 0 L10 5 H0 Z" fill="#c83030" /></svg>
        S
      </span>
    ),
  },
  { name: '移动', icon: <Move className="h-[23px] w-[23px] text-[#1850c0]" strokeWidth={3} /> },
  { name: '画笔', icon: <Pencil className="h-[22px] w-[22px] fill-[#f0a020] text-[#80501c]" strokeWidth={1.5} /> },
];

const sidePeriods = ['1', '5', '15', '30', '60', '日', '周', '月', 'N', '多', '季', '年'];

const SideBar = () => (
  <nav className="flex w-[37px] shrink-0 flex-col border-l-2 border-[#909090] bg-[#f0f0f0] text-[#103090]">
    {sideTools.map((t) => (
      <button key={t.name} aria-label={t.name} className="flex h-[33px] items-center justify-center">{t.icon}</button>
    ))}
    <hr className="mx-1 my-[5px] border-t-2 border-[#a8a8a8]" />
    {drawTools.map((t) => (
      <button key={t.name} aria-label={t.name} className="flex h-[33px] items-center justify-center">{t.icon}</button>
    ))}
    <hr className="mx-1 my-[5px] border-t-2 border-[#a8a8a8]" />
    <button aria-label="F5" className="flex h-[33px] items-center justify-center"><BoxText text="F5" /></button>
    <button aria-label="刷新" className="flex h-[33px] items-center justify-center">
      <span className="flex h-[22px] w-[24px] items-center justify-center border-2 border-[#6090f0] bg-white">
        <RefreshCw className="h-4 w-4 text-[#30b030]" strokeWidth={3} />
      </span>
    </button>
    {sidePeriods.map((p) => (
      <button
        key={p}
        className={`h-[33px] text-[17px] leading-none ${p === '日' ? 'border-l border-t border-[#909090] bg-[#fafafa]' : ''}`}
      >
        {p}
      </button>
    ))}
  </nav>
);

const StatusBar = () => (
  <footer className="flex h-9 items-center whitespace-nowrap border-b border-[#404040] bg-[#f0f0f0] text-[21px] font-bold text-[#008000]">
    <svg className="mx-[2px] h-[21px] w-[21px] shrink-0" viewBox="0 0 21 21">
      <rect width="21" height="21" rx="2" fill="#f0a820" />
      <rect x="4" y="4" width="13" height="13" fill="#fff0c0" />
      <rect x="6" y="6" width="9" height="9" fill="#f0a030" />
    </svg>
    {indices.map((x) => (
      <div key={x.name} className="mr-[25px] flex items-center">
        <span className="text-[24px] font-light leading-7 text-black">{x.name}</span>
        <span className="ml-[6px] w-[94px]">{x.last}</span>
        <span className="w-[81px]">{x.diff}</span>
        <span className="w-[87px]">{x.pct}</span>
        <span className="text-[#101010]">{x.amount}<span className="text-[24px] font-light leading-none">亿</span></span>
      </div>
    ))}
    <span className="text-[24px] font-light leading-7 text-black">创业</span>
    <span className="ml-[6px] w-[94px]">2315.87</span>
    <span className="w-[76px]">-30.83</span>
    <span>-</span>
  </footer>
);

const Banner = () => (
  <a href="#home" className="absolute bottom-0 right-0 flex h-[109px] w-1/2 items-center bg-[#7faada] pl-5">
    <span className="text-[75px] font-black leading-none text-[#1a0082]">公式指标网</span>
    <svg className="ml-6 h-[115px] w-[140px] shrink-0" viewBox="0 0 420 345">
      <path d="M45 175 A155 155 0 0 1 165 30 L170 65 A120 120 0 0 0 80 175 Z" fill="#d85c48" />
      <path d="M235 30 A155 155 0 0 1 355 175 H320 A120 120 0 0 0 232 65 Z" fill="#d85c48" />
      <path d="M355 185 A155 152 0 0 1 178 335 V298 A122 118 0 0 0 320 185 Z" fill="#ecd04c" />
      <g fill="#e8cc4c">
        <path d="M173 27 H228 L222 87 H262 V173 H222 V127 H212 V173 H138 V137 H178 V127 H138 V87 H180 Z" />
        <path d="M138 185 H262 V211 H222 V219 H262 V243 H224 V253 H264 L267 275 L238 290 L212 225 H190 L164 290 L132 275 L138 253 H176 V243 H138 V219 H178 V211 H138 Z" />
      </g>
      <circle cx="200" cy="48" r="12" fill="#80acda" />
      <path id="ring" d="M49 190 A150 150 0 0 0 175 324" fill="none" />
      <text fontSize="31" fontWeight="bold" fill="#fff"><textPath href="#ring">www.9m8.cn</textPath></text>
    </svg>
    <span className="ml-5 font-['Liberation_Serif',serif] text-[88px] font-bold leading-none text-[#fafafa]">www.9m8.cn</span>
  </a>
);

const App = () => (
  <div className="relative min-h-screen overflow-hidden bg-black font-['Liberation_Sans','Noto_Sans_CJK_SC',sans-serif] leading-none">
    <TitleBar />
    <div className="flex">
      <main className="min-w-0 flex-1">
        <Toolbar />
        <div className="flex h-[29px] text-[17px] whitespace-nowrap">
          <div className="flex flex-1 items-center border-r border-[#a00000] pl-1">
            <span className="text-[18px] text-[#b8b8b8]">康力电梯(日线)</span>
            <span className="ml-2 mr-[7px] flex"><Dropdown /></span>
            {averages.map((a) => (
              <span key={a.text} className={`mr-3 flex items-center ${a.color}`}>{a.text}<UpArrow /></span>
            ))}
            <span className="ml-auto mr-[5px] flex items-center gap-3">
              <svg className="h-4 w-4" viewBox="0 0 16 16"><path d="M8 1 L15 8 L8 15 L1 8 Z" fill="none" stroke="#808080" /></svg>
              <PanelIcon />
            </span>
          </div>
          <div className="w-[75px]" />
        </div>
        <PriceChart />
        <div className="flex h-7 whitespace-nowrap border-t-2 border-[#900000] text-[18px]">
          <div className="flex flex-1 items-center pl-[3px]">
            <Dropdown />
            <span className="ml-[6px] mr-[14px] text-[#b8b8b8]">波段飞涨</span>
            {signals.map((s, i) => (
              <span key={i} className={`flex items-center ${s.color}`}>
                {s.text}
                {s.up && <UpArrow />}
                <i className="w-2" />
              </span>
            ))}
          </div>
          <div className="w-[76px] border-x-2 border-t-2 border-[#b00000]" />
        </div>
        <SignalChart />
        <nav className="flex h-[26px] border-l border-t border-[#b00000] text-[18px] text-[#b8b8b8]">
          {tabs.map((t) => (
            <button key={t} className={`whitespace-nowrap border-r border-[#b00000] px-[5px] ${t === '设置' ? 'text-[#54fcfc]' : ''}`}>{t}</button>
          ))}
        </nav>
        <nav className="flex h-[27px] border-y border-l border-[#b00000] text-[18px] text-[#b8b8b8]">
          {extras.map((t, i) => (
            <button key={t} className={`whitespace-nowrap border-r border-[#b00000] px-[5px] ${i > 2 && i < 6 ? 'text-[#d0d000]' : ''}`}>{t}</button>
          ))}
        </nav>
      </main>
      <QuotePanel />
      <SideBar />
    </div>
    <StatusBar />
    <Banner />
  </div>
);

export default App;
